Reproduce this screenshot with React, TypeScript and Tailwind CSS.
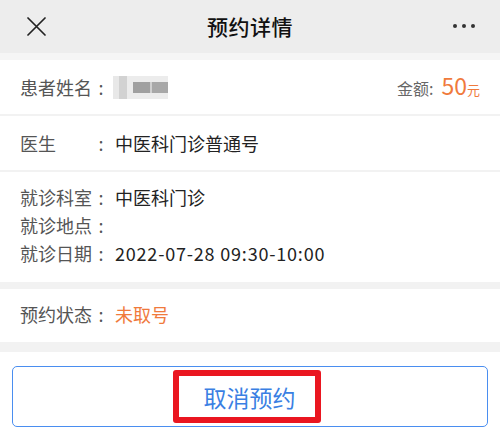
const font = { fontFamily: '"Noto Sans CJK SC", "Noto Sans", sans-serif' };

function Field({ label, children }: { label: string; children?: React.ReactNode }) {
  return (
    <div className="flex items-center h-[28px]">
      <span className="w-[72px] text-[#555]">{label}</span>
      <span className="w-[18px] text-center text-[#555]">:</span>
      <span className="ml-[5px] text-[#222]">{children}</span>
    </div>
  );
}

function BlurredName() {
  // pixelated placeholder for the hidden patient name
  return (
    <div className="ml-[3px] flex h-[23px] w-[55px] items-stretch blur-[0.6px]">
      <div className="w-[6px] bg-[#e8e8e8]" />
      <div className="w-[8px] bg-[#d2d2d2]" />
      <div className="w-[6px] bg-[#ececec]" />
      <div className="flex w-[35px] flex-col">
        <div className="h-[6px] bg-[#ececec]" />
        <div className="flex h-[11px]">
          <div className="w-[17px] bg-[#a0a0a0]" />
          <div className="w-[2px] bg-[#d0d0d0]" />
          <div className="w-[16px] bg-[#a8a8a8]" />
        </div>
        <div className="h-[6px] bg-[#ececec]" />
      </div>
    </div>
  );
}

export default function App() {
  return (
    <div className="w-[500px] h-[438px] bg-[#f2f2f2] overflow-hidden" style={font}>
      {/* Top bar */}
      <div className="relative flex h-[53px] items-center justify-center bg-[#ededed]">
        <svg className="absolute left-[27px] top-[17px]" width="19" height="19" viewBox="0 0 19 19" fill="none">
          <path d="M1 1L18 18M18 1L1 18" stroke="#222" strokeWidth="1.7" strokeLinecap="round" />
        </svg>
        <h1 className="text-[21px] font-medium tracking-[0.5px] text-[#111]">预约详情</h1>
        <div className="absolute right-[25px] top-[24px] flex gap-[5px]">
          <span className="h-[4px] w-[4px] rounded-full bg-[#333]" />
          <span className="h-[4px] w-[4px] rounded-full bg-[#333]" />
          <span className="h-[4px] w-[4px] rounded-full bg-[#333]" />
        </div>
      </div>
      <div className="h-[7px] bg-[#f5f5f5]" />

      <div className="text-[18px] leading-[28px]">
        {/* Patient */}
        <div className="flex h-[54px] items-center justify-between bg-white pl-[20px] pr-[20px]">
          <div className="flex items-center">
            <span className="w-[72px] text-[#555]">患者姓名</span>
            <span className="w-[18px] text-center text-[#555]">:</span>
            <BlurredName />
          </div>
          <div className="flex items-baseline">
            <span className="text-[16px] text-[#666]">金额:</span>
            <span className="ml-[8px] text-[23px] text-[#f07a3c]">50</span>
            <span className="text-[13px] text-[#f07a3c]">元</span>
          </div>
        </div>
        <div className="h-[2px]" />

        {/* Doctor */}
        <div className="flex h-[54px] items-center bg-white pl-[20px]">
          <Field label="医生">中医科门诊普通号</Field>
        </div>
        <div className="h-[2px]" />

        {/* Visit */}
        <div className="flex h-[110px] flex-col justify-center bg-white pl-[20px] pb-[4px]">
          <Field label="就诊科室">中医科门诊</Field>
          <Field label="就诊地点" />
          <Field label="就诊日期">
            <span className="tracking-[0.8px]">2022-07-28 09:30-10:00</span>
          </Field>
        </div>
        <div className="h-[7px]" />

        {/* Status */}
        <div className="flex h-[53px] items-center bg-white pl-[20px] pb-[3px]">
          <Field label="预约状态">
            <span className="text-[#f07a3c]">未取号</span>
          </Field>
        </div>
        <div className="h-[10px]" />

        {/* Action */}
        <div className="bg-white px-[12px] pt-[14px] pb-[12px]">
          <button className="flex h-[61px] w-full items-center justify-center rounded-[5px] border border-[#4a8ef0] bg-white">
            <span className="mr-[6px] flex h-[53px] w-[148px] items-center justify-center rounded-[3px] border-[6px] border-[#ea1620] pl-[5px] text-[23px] text-[#3a7fe3]">
              取消预约
            </span>
          </button>
        </div>
      </div>
    </div>
  );
}
